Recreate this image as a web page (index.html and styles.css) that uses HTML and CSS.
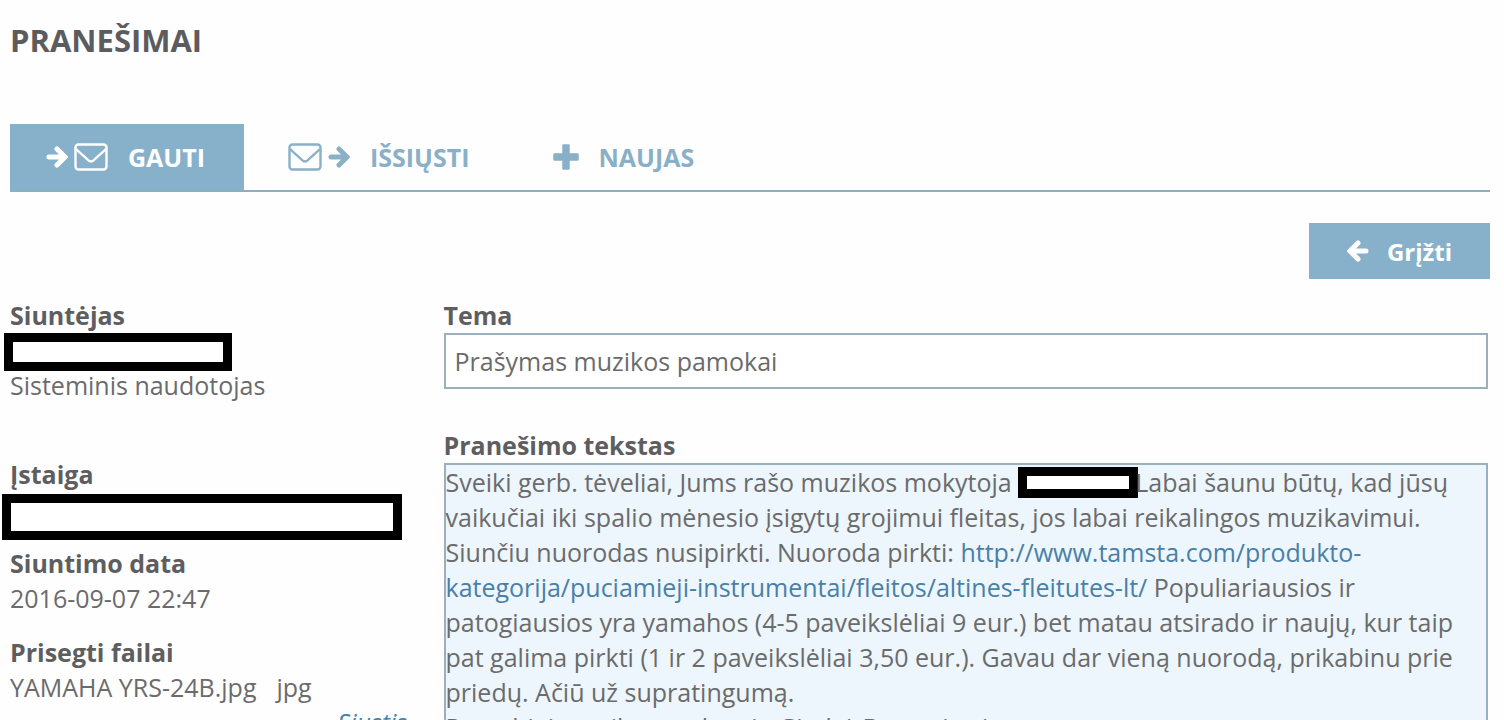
FILE: index.html
```html
<!DOCTYPE html>
<html lang="lt">
<head>
<meta charset="utf-8">
<title>Pranešimai</title>
<link rel="stylesheet" href="styles.css">
</head>
<body>
<svg class="sprite" aria-hidden="true">
  <symbol id="arrow" viewBox="0 0 22 24"><path d="M3 12h14M11 4l8 8-8 8" fill="none" stroke="currentColor" stroke-width="5" stroke-linecap="round"/></symbol>
  <symbol id="mail" viewBox="0 0 34 28"><rect x="1.500" y="1.500" width="31" height="25" rx="3" fill="none" stroke="currentColor" stroke-width="2.400"/><path d="M2 6c5 5 9 8 12 11q3 3 6 0c3-3 7-6 12-11" fill="none" stroke="currentColor" stroke-width="2.400"/></symbol>
  <symbol id="plus" viewBox="0 0 26 26"><path d="M10.500 1.500h5v9h9v5h-9v9h-5v-9h-9v-5h9z" fill="currentColor" stroke="currentColor" stroke-width="2.500" stroke-linejoin="round"/></symbol>
</svg>
<main class="page">
  <h1 class="title">PRANEŠIMAI</h1>
  <nav class="tabs">
    <a class="tab tab-active" href="#gauti"><span class="icons"><svg class="arrow"><use href="#arrow"/></svg><svg class="mail"><use href="#mail"/></svg></span>GAUTI</a>
    <a class="tab" href="#issiusti"><span class="icons"><svg class="mail"><use href="#mail"/></svg><svg class="arrow"><use href="#arrow"/></svg></span>IŠSIŲSTI</a>
    <a class="tab" href="#naujas"><svg class="plus"><use href="#plus"/></svg>NAUJAS</a>
  </nav>
  <div class="actions">
    <button class="back" type="button"><svg class="arrow arrow-back"><use href="#arrow"/></svg>Grįžti</button>
  </div>
  <div class="message">
    <aside class="details">
      <section class="sender">
        <h2 class="label">Siuntėjas</h2>
        <div class="redacted redacted-name"></div>
        <p class="value">Sisteminis naudotojas</p>
      </section>
      <section class="school">
        <h2 class="label">Įstaiga</h2>
        <div class="redacted redacted-school"></div>
      </section>
      <section class="date">
        <h2 class="label">Siuntimo data</h2>
        <p class="value">2016-09-07 22:47</p>
      </section>
      <section>
        <h2 class="label">Prisegti failai</h2>
        <p class="value file"><span>YAMAHA YRS-24B.jpg</span><span>jpg</span></p>
        <a class="download" href="#siustis">Siųstis</a>
      </section>
    </aside>
    <div class="content">
      <label class="label" for="subject">Tema</label>
      <input class="subject" id="subject" type="text" value="Prašymas muzikos pamokai">
      <h2 class="label">Pranešimo tekstas</h2>
      <div class="text">Sveiki gerb. tėveliai, Jums rašo muzikos mokytoja <span class="redacted redacted-inline"></span>Labai šaunu būtų, kad jūsų vaikučiai iki spalio mėnesio įsigytų grojimui fleitas, jos labai reikalingos muzikavimui. Siunčiu nuorodas nusipirkti. Nuoroda pirkti: <a class="link" href="#tamsta">http://www.tamsta.com/produkto-kategorija/puciamieji-instrumentai/fleitos/altines-fleitutes-lt/</a> Populiariausios ir patogiausios yra yamahos (4-5 paveikslėliai 9 eur.) bet matau atsirado ir naujų, kur taip pat galima pirkti (1 ir 2 paveikslėliai 3,50 eur.). Gavau dar vieną nuorodą, prikabinu prie priedų. Ačiū už supratingumą.<br>Pagarbiai muzikos mokytoja Giedrė Bernotienė</div>
    </div>
  </div>
</main>
</body>
</html>
```

FILE: styles.css
```css
* { box-sizing: border-box; }
body {
  margin: 0;
  background: #fefefe;
  color: #6b6b6c;
  font: 25px/35px "Open Sans", "Noto Sans", sans-serif;
}
.sprite { display: none; }
.page {
  height: 100vh;
  overflow: hidden;
  padding: 20px 14px 0 10px;
}
.title {
  margin: 0 0 64px;
  color: #5c5c5e;
  font-size: 31px;
  font-weight: 700;
  line-height: 40px;
}
.tabs {
  display: flex;
  gap: 8px;
  border-bottom: 2px solid #8caebf;
}
.tab {
  display: flex;
  align-items: center;
  gap: 20px;
  height: 66px;
  padding: 0 39px 0 36px;
  color: #89b0c7;
  font-weight: 700;
  text-decoration: none;
}
.tab-active {
  background: #87b1cb;
  color: #fff;
}
.icons { display: flex; align-items: center; gap: 6px; }
.arrow { width: 22px; height: 24px; }
.mail { width: 34px; height: 28px; }
.plus { width: 26px; height: 26px; }
.actions {
  display: flex;
  justify-content: flex-end;
  margin: 31px 0 19px;
}
.back {
  display: flex;
  align-items: center;
  gap: 18px;
  height: 56px;
  padding: 0 38px;
  border: 0;
  background: #87b1cb;
  color: #fff;
  font: inherit;
  font-size: 24px;
  font-weight: 700;
}
.arrow-back { transform: rotate(180deg); }
.message {
  display: grid;
  grid-template-columns: 29fr 70fr;
}
.label {
  display: block;
  margin: 0;
  color: #5e5e60;
  font-size: 25px;
  font-weight: 700;
  line-height: 35px;
}
.value { margin: 0; }
.redacted {
  border: 9px solid #000;
  background: #fff;
}
.redacted-name { width: 228px; height: 38px; margin: 0 0 -3px -6px; }
.redacted-school { width: 400px; height: 46px; margin: 2px 0 0 -8px; }
.redacted-inline {
  display: inline-block;
  width: 120px;
  height: 31px;
  margin: 2px -3px 0 0;
  vertical-align: top;
}
.sender { margin-bottom: 54px; }
.school { margin-bottom: 6px; }
.date { margin-bottom: 19px; }
.file { display: flex; gap: 20px; }
.download {
  display: block;
  width: 397px;
  color: #4a83ab;
  font-style: italic;
  text-align: right;
  text-decoration: none;
}
.subject {
  display: block;
  width: 100%;
  height: 56px;
  margin-bottom: 39px;
  padding: 0 9px;
  border: 2px solid #9ab0bc;
  background: #fff;
  color: inherit;
  font: inherit;
}
.content { padding-right: 2px; }
.text {
  padding-right: 20px;
  border: 2px solid #9ab0bc;
  background: #edf6fc;
}
.link { color: #4a7fa8; text-decoration: none; }
```
